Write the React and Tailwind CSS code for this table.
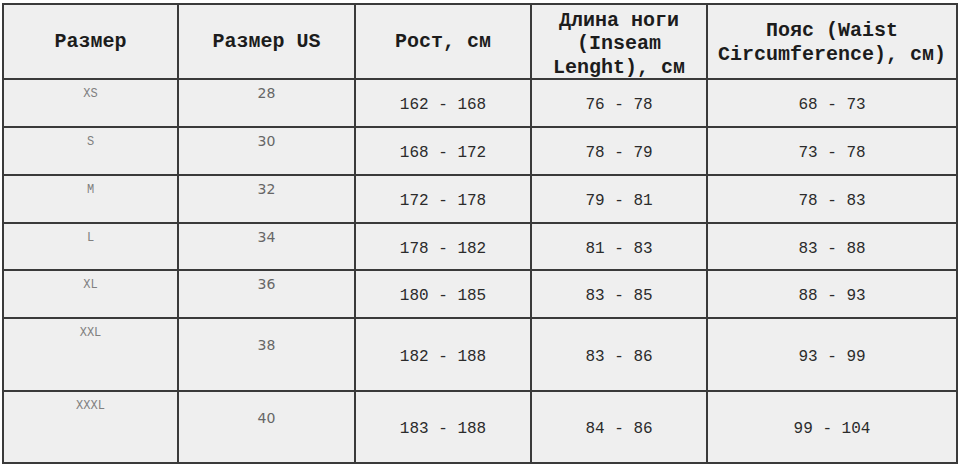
const rows = [
  { size: "XS", us: "28", height: "162 - 168", leg: "76 - 78", waist: "68 - 73", tall: false },
  { size: "S", us: "30", height: "168 - 172", leg: "78 - 79", waist: "73 - 78", tall: false },
  { size: "M", us: "32", height: "172 - 178", leg: "79 - 81", waist: "78 - 83", tall: false },
  { size: "L", us: "34", height: "178 - 182", leg: "81 - 83", waist: "83 - 88", tall: false },
  { size: "XL", us: "36", height: "180 - 185", leg: "83 - 85", waist: "88 - 93", tall: false },
  { size: "XXL", us: "38", height: "182 - 188", leg: "83 - 86", waist: "93 - 99", tall: true },
  { size: "XXXL", us: "40", height: "183 - 188", leg: "84 - 86", waist: "99 - 104", tall: true },
];

const mono = "font-['Liberation_Mono','Courier_New',monospace]";

export default function App() {
  const headCell = `bg-[#efefef] flex items-center justify-center text-center ${mono} font-bold text-[20px] leading-[23.5px] text-[#1c1c1c]`;
  const valueCell = `bg-[#efefef] flex items-center justify-center pt-[4px] ${mono} text-[16px] leading-[20px] text-[#2b2b2b]`;

  return (
    <div className="w-[960px] h-[466px] bg-white pt-[3px] pl-[2px]">
      <div className="w-[956px] grid grid-cols-[173px_175px_174px_174px_248px] grid-rows-[73px_46px_46px_46px_45px_46px_71px_70px] gap-[2px] p-[2px] bg-[#3a3a3a]">
        {/* Header */}
        <div className={headCell}>Размер</div>
        <div className={headCell}>Размер US</div>
        <div className={headCell}>Рост, см</div>
        <div className={`${headCell} pt-[5px]`}>
          Длина ноги
          <br />
          (Inseam
          <br />
          Lenght), см
        </div>
        <div className={`${headCell} pt-[2px]`}>
          Пояс (Waist
          <br />
          Circumference), см)
        </div>

        {/* Rows */}
        {rows.map((r) => (
          <div key={r.size} className="contents">
            <div className={`bg-[#efefef] text-center pt-[6px] ${mono} text-[12px] leading-[16px] text-[#808080]`}>
              {r.size}
            </div>
            <div
              className={`bg-[#efefef] text-center font-['DejaVu_Sans',sans-serif] text-[14px] leading-[16px] text-[#666666] ${
                r.tall ? "pt-[18px]" : "pt-[5px]"
              }`}
            >
              {r.us}
            </div>
            <div className={valueCell}>{r.height}</div>
            <div className={valueCell}>{r.leg}</div>
            <div className={valueCell}>{r.waist}</div>
          </div>
        ))}
      </div>
    </div>
  );
}
